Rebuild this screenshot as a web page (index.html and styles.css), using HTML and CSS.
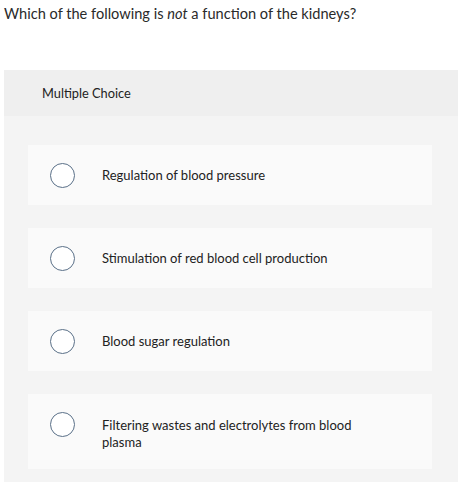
FILE: index.html
```html
<!DOCTYPE html>
<html>
<head>
<meta charset="utf-8">
<link rel="stylesheet" href="styles.css">
</head>
<body>
<p class="question">Which of the following is <em>not</em> a function of the kidneys?</p>
<section class="panel">
  <div class="panel-header">Multiple Choice</div>
  <div class="options">
    <div class="option"><span class="radio"></span><span class="label">Regulation of blood pressure</span></div>
    <div class="option"><span class="radio"></span><span class="label">Stimulation of red blood cell production</span></div>
    <div class="option"><span class="radio"></span><span class="label">Blood sugar regulation</span></div>
    <div class="option option-multi"><span class="radio"></span><span class="label">Filtering wastes and electrolytes from blood plasma</span></div>
  </div>
</section>
</body>
</html>
```
FILE: styles.css
```css
html, body { margin: 0; background: #fff; }
body {
  padding: 0 4px;
  font-family: Lato, "Open Sans", sans-serif;
  color: #333;
}
.question {
  margin: 4px 0 0;
  font-size: 14.6px;
  line-height: 20px;
  color: #2a2a2a;
}
.panel {
  margin-top: 46px;
  width: 454px;
  background: #f4f4f4;
}
.panel-header {
  height: 46px;
  display: flex;
  align-items: center;
  padding-left: 38px;
  background: #efefef;
  font-size: 12.8px;
  color: #222;
}
.options {
  display: flex;
  flex-direction: column;
  gap: 23px;
  padding: 29px 26px 13px 24px;
}
.option {
  display: flex;
  align-items: center;
  min-height: 60px;
  padding: 0 62px 0 22px;
  background: #fafafa;
  box-sizing: border-box;
}
.option-multi {
  align-items: flex-start;
  padding-top: 22.5px;
  padding-bottom: 17.5px;
}
.option-multi .radio { margin-top: -4.5px; }
.option-multi .label { line-height: 17.5px; }
.radio {
  flex: none;
  width: 23px;
  height: 23px;
  border: 1.5px solid #5a7088;
  border-radius: 50%;
  background: #fff;
}
.label {
  margin-left: 27px;
  font-size: 13px;
  line-height: 17px;
  color: #222;
}
```
